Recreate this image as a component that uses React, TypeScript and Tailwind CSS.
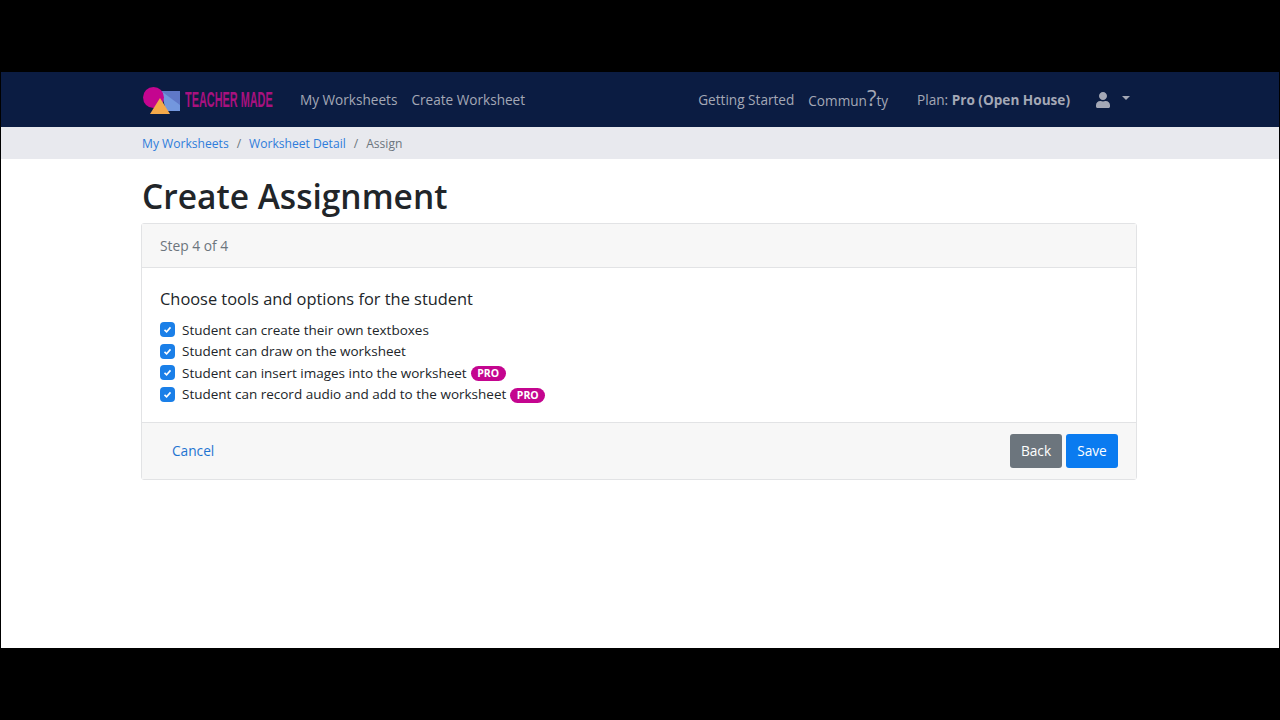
import { FaUser } from "react-icons/fa";

const options = [
  { label: "Student can create their own textboxes", pro: false },
  { label: "Student can draw on the worksheet", pro: false },
  { label: "Student can insert images into the worksheet", pro: true },
  { label: "Student can record audio and add to the worksheet", pro: true },
];

function Logo() {
  return (
    <div className="flex w-[131px] items-center">
      <svg width="40" height="30" viewBox="0 0 40 30" className="shrink-0">
        <path d="M19 6 L38 6 L38 26 L24 26 Z" fill="#7397de" />
        <path d="M19 6 L38 6 L38 20 Z" fill="#5f78c8" />
        <circle cx="11.5" cy="12.5" r="10.5" fill="#c4058f" />
        <path d="M18 13 L28 29 L8 29 Z" fill="#f5a94a" />
      </svg>
      <span className="ml-[3px] origin-left scale-x-[0.495] whitespace-nowrap font-['Liberation_Sans',sans-serif] text-[22px] font-bold leading-none text-[#a8117f]">
        TEACHER MADE
      </span>
    </div>
  );
}

function Check() {
  return (
    <span className="flex h-[15px] w-[15px] shrink-0 items-center justify-center rounded-[4px] bg-[#1a7fe8]">
      <svg width="9" height="9" viewBox="0 0 9 9" fill="none">
        <path d="M1.5 4.8 L3.6 6.8 L7.5 2.4" stroke="white" strokeWidth="1.6" />
      </svg>
    </span>
  );
}

export default function App() {
  return (
    <div className="flex h-[720px] flex-col bg-black pt-[72px] pb-[72px] font-['Open_Sans','Noto_Sans',sans-serif]">
      <div className="mx-[1px] flex flex-1 flex-col bg-white">
        <nav className="flex h-[55px] items-center bg-[#0b1c42] pl-[141px] pr-[149px] text-[13.6px] text-[#a4a8b6]">
          <Logo />
          <a className="ml-[27px] pt-[1px]">My Worksheets</a>
          <a className="ml-[14px] pt-[1px]">Create Worksheet</a>
          <div className="flex-1" />
          <a className="pt-[1px]">Getting Started</a>
          <a className="ml-[14px] pb-[2px]">
            Commun<span className="text-[22px] leading-none">?</span>ty
          </a>
          <span className="ml-[29px] pt-[1px]">
            Plan: <b className="font-bold">Pro (Open House)</b>
          </span>
          <FaUser className="ml-[25px] h-[16px] w-[16px]" />
          <span className="ml-[11px] mb-[3px] h-0 w-0 border-x-[4px] border-t-[4px] border-x-transparent border-t-[#a4a8b6]" />
        </nav>
        <div className="flex h-[32px] items-center bg-[#e8e9ee] pl-[141px] pt-[3px] text-[12.1px] text-[#6c757d]">
          <a className="text-[#2f7ddb]">My Worksheets</a>
          <span className="mx-[8px]">/</span>
          <a className="text-[#2f7ddb]">Worksheet Detail</a>
          <span className="mx-[8px]">/</span>
          <span>Assign</span>
        </div>
        <div className="ml-[140px] w-[996px]">
          <h1 className="mt-[17px] mb-[6px] ml-[1px] text-[33.5px] font-[550] leading-[41px] text-[#212529]">
            Create Assignment
          </h1>
          <div className="rounded-[3px] border border-[#e2e3e5]">
            <div className="flex h-[44px] items-center border-b border-[#e2e3e5] bg-[#f7f7f7] px-[18px] pt-[2px] text-[13.8px] text-[#6c757d]">
              Step 4 of 4
            </div>
            <div className="h-[154px] px-[18px] pt-[20px]">
              <h5 className="mb-[10px] text-[16.4px] leading-[21px] text-[#212529]">
                Choose tools and options for the student
              </h5>
              <div className="flex flex-col text-[13.5px] text-[#212529]">
                {options.map((o) => (
                  <label key={o.label} className="flex h-[21.5px] items-center gap-[7px]">
                    <Check />
                    <span>{o.label}</span>
                    {o.pro && (
                      <span className="-ml-[3px] mt-[2px] rounded-full bg-[#c4058f] px-[6.5px] text-[10.5px] font-bold leading-[15px] text-white">
                        PRO
                      </span>
                    )}
                  </label>
                ))}
              </div>
            </div>
            <div className="flex h-[57px] items-center border-t border-[#e2e3e5] bg-[#f7f7f7] pl-[30px] pr-[18px] text-[13.7px]">
              <a className="text-[#1f74d1]">Cancel</a>
              <div className="flex-1" />
              <button className="h-[34px] w-[52px] rounded-[3px] bg-[#6c757d] text-white">Back</button>
              <button className="ml-[4px] h-[34px] w-[52px] rounded-[3px] bg-[#0a7bf0] text-white">Save</button>
            </div>
          </div>
        </div>
      </div>
    </div>
  );
}
